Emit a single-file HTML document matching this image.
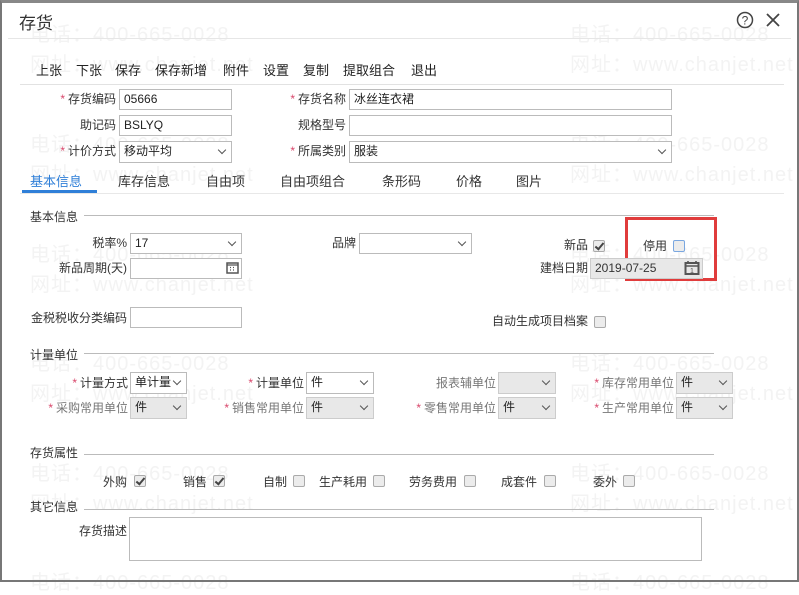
<!DOCTYPE html>
<html><head><meta charset="utf-8"><style>
*{box-sizing:border-box;margin:0;padding:0}
body{width:799px;height:583px;position:relative;background:#fff;font-family:"Liberation Sans","Noto Sans CJK SC",sans-serif;font-size:12px;color:#333;overflow:hidden}
.a{position:absolute;white-space:nowrap}
.wm{position:absolute;font-size:20px;color:#f3f3f3;letter-spacing:1px;white-space:nowrap}
.lb{position:absolute;text-align:right;white-space:nowrap;line-height:21px}
.st{color:#d9476b;margin-right:3px}
.in{position:absolute;border:1px solid #bbb;background:#fff;height:21px;line-height:19px;padding-left:4px;font-size:12px;color:#222}
.dis{background:#e8e8e8;border-color:#ccc}
.sel:after{content:"";position:absolute;right:6px;top:5px;width:5px;height:5px;border-right:1.6px solid #555;border-bottom:1.6px solid #555;transform:rotate(45deg)}
.cb{position:absolute;width:12px;height:12px;border:1px solid #aaa;border-radius:2px;background:#ececec}
.cb.on:after{content:"";position:absolute;left:3px;top:0px;width:3px;height:7px;border-right:2px solid #444;border-bottom:2px solid #444;transform:rotate(40deg)}
.ln{position:absolute;height:1px;background:#bbb}
.g{color:#777}
.tb{position:absolute;top:60px;font-size:13px;color:#222;white-space:nowrap}
</style></head><body>
<div class="wm" style="left:30px;top:18px">电话：400-665-0028</div><div class="wm" style="left:570px;top:18px">电话：400-665-0028</div>
<div class="wm" style="left:30px;top:48px">网址：www.chanjet.net</div><div class="wm" style="left:570px;top:48px">网址：www.chanjet.net</div>
<div class="wm" style="left:30px;top:128px">电话：400-665-0028</div><div class="wm" style="left:570px;top:128px">电话：400-665-0028</div>
<div class="wm" style="left:30px;top:158px">网址：www.chanjet.net</div><div class="wm" style="left:570px;top:158px">网址：www.chanjet.net</div>
<div class="wm" style="left:30px;top:238px">电话：400-665-0028</div><div class="wm" style="left:570px;top:238px">电话：400-665-0028</div>
<div class="wm" style="left:30px;top:268px">网址：www.chanjet.net</div><div class="wm" style="left:570px;top:268px">网址：www.chanjet.net</div>
<div class="wm" style="left:30px;top:347px">电话：400-665-0028</div><div class="wm" style="left:570px;top:347px">电话：400-665-0028</div>
<div class="wm" style="left:30px;top:377px">网址：www.chanjet.net</div><div class="wm" style="left:570px;top:377px">网址：www.chanjet.net</div>
<div class="wm" style="left:30px;top:457px">电话：400-665-0028</div><div class="wm" style="left:570px;top:457px">电话：400-665-0028</div>
<div class="wm" style="left:30px;top:487px">网址：www.chanjet.net</div><div class="wm" style="left:570px;top:487px">网址：www.chanjet.net</div>
<div class="wm" style="left:30px;top:566px">电话：400-665-0028</div><div class="wm" style="left:570px;top:566px">电话：400-665-0028</div>

<div class="a" style="left:0;top:0;width:799px;height:582px;border:2px solid #777;border-top:3px solid #888"></div>
<div class="a" style="left:19px;top:9px;font-size:17px;color:#333">存货</div>
<svg class="a" style="left:736px;top:11px" width="18" height="18"><circle cx="9" cy="9" r="7.5" fill="none" stroke="#444" stroke-width="1.5"/><text x="9" y="13.5" text-anchor="middle" font-size="12" font-family="Liberation Sans" fill="#444">?</text></svg>
<svg class="a" style="left:765px;top:12px" width="16" height="16"><path d="M2 2L14 14M14 2L2 14" stroke="#444" stroke-width="1.8"/></svg>
<div class="ln" style="left:8px;top:38px;width:783px;background:#e6e6e6"></div>
<div class="tb" style="left:36px">上张</div>
<div class="tb" style="left:76px">下张</div>
<div class="tb" style="left:115px">保存</div>
<div class="tb" style="left:155px">保存新增</div>
<div class="tb" style="left:223px">附件</div>
<div class="tb" style="left:263px">设置</div>
<div class="tb" style="left:303px">复制</div>
<div class="tb" style="left:343px">提取组合</div>
<div class="tb" style="left:411px">退出</div>
<div class="ln" style="left:20px;top:84px;width:764px;background:#e2e2e2"></div>

<div class="lb" style="left:20px;top:89px;width:96px"><span class="st">*</span>存货编码</div>
<div class="in" style="left:119px;top:89px;width:113px">05666</div>
<div class="lb" style="left:250px;top:89px;width:96px"><span class="st">*</span>存货名称</div>
<div class="in" style="left:349px;top:89px;width:323px">冰丝连衣裙</div>
<div class="lb" style="left:20px;top:115px;width:96px">助记码</div>
<div class="in" style="left:119px;top:115px;width:113px">BSLYQ</div>
<div class="lb" style="left:250px;top:115px;width:96px">规格型号</div>
<div class="in" style="left:349px;top:115px;width:323px"></div>
<div class="lb" style="left:20px;top:141px;width:96px"><span class="st">*</span>计价方式</div>
<div class="in sel" style="left:119px;top:141px;width:113px;height:22px">移动平均</div>
<div class="lb" style="left:250px;top:141px;width:96px"><span class="st">*</span>所属类别</div>
<div class="in sel" style="left:349px;top:141px;width:323px;height:22px">服装</div>

<div class="a" style="left:30px;top:171px;font-size:13px;color:#2f7fd8">基本信息</div>
<div class="a" style="left:22px;top:190px;width:75px;height:3px;background:#2f7fd8"></div>
<div class="a" style="left:118px;top:171px;font-size:13px">库存信息</div>
<div class="a" style="left:206px;top:171px;font-size:13px">自由项</div>
<div class="a" style="left:280px;top:171px;font-size:13px">自由项组合</div>
<div class="a" style="left:382px;top:171px;font-size:13px">条形码</div>
<div class="a" style="left:456px;top:171px;font-size:13px">价格</div>
<div class="a" style="left:516px;top:171px;font-size:13px">图片</div>
<div class="ln" style="left:20px;top:193px;width:764px;background:#e8e8e8"></div>

<div class="a" style="left:30px;top:208px">基本信息</div>
<div class="ln" style="left:84px;top:215px;width:630px"></div>
<div class="lb" style="left:30px;top:233px;width:97px">税率%</div>
<div class="in sel" style="left:130px;top:233px;width:112px">17</div>
<div class="lb" style="left:260px;top:233px;width:96px">品牌</div>
<div class="in sel" style="left:359px;top:233px;width:113px"></div>
<div class="lb" style="left:500px;top:235px;width:88px">新品</div>
<div class="cb on" style="left:593px;top:240px"></div>
<div class="a" style="left:643px;top:237px">停用</div>
<div class="cb" style="left:673px;top:240px;border-color:#7aa7e0"></div>
<div class="a" style="left:625px;top:217px;width:92px;height:64px;border:3px solid #e03c3c"></div>
<div class="lb" style="left:30px;top:258px;width:97px">新品周期(天)</div>
<div class="in" style="left:130px;top:258px;width:112px"></div>
<svg class="a" style="left:226px;top:261px" width="13" height="13"><rect x="1" y="2" width="11" height="10" fill="none" stroke="#555" stroke-width="1.5"/><path d="M1 4h11M4 6.5h1M7 6.5h1M4 9h1M7 9h1" stroke="#555" stroke-width="1.3"/></svg>
<div class="lb" style="left:500px;top:258px;width:88px">建档日期</div>
<div class="in dis" style="left:590px;top:258px;width:113px;color:#333">2019-07-25</div>
<svg class="a" style="left:684px;top:260px" width="16" height="16"><rect x="1.5" y="3" width="13" height="11" fill="none" stroke="#555" stroke-width="2"/><path d="M4 1v3M12 1v3M1 6h14" stroke="#555" stroke-width="1.6"/><text x="8" y="13" font-size="7" text-anchor="middle" fill="#555" font-family="Liberation Sans">1</text></svg>
<div class="lb" style="left:10px;top:308px;width:117px">金税税收分类编码</div>
<div class="in" style="left:130px;top:307px;width:112px"></div>
<div class="lb" style="left:440px;top:311px;width:148px">自动生成项目档案</div>
<div class="cb" style="left:594px;top:316px"></div>

<div class="a" style="left:30px;top:346px">计量单位</div>
<div class="ln" style="left:84px;top:353px;width:630px"></div>
<div class="lb" style="left:40px;top:373px;width:88px"><span class="st">*</span>计量方式</div>
<div class="in sel" style="left:130px;top:372px;width:57px;height:22px">单计量</div>
<div class="lb" style="left:200px;top:373px;width:104px"><span class="st">*</span>计量单位</div>
<div class="in sel" style="left:306px;top:372px;width:68px;height:22px">件</div>
<div class="lb g" style="left:400px;top:373px;width:96px">报表辅单位</div>
<div class="in sel dis" style="left:498px;top:372px;width:58px;height:22px"></div>
<div class="lb g" style="left:570px;top:373px;width:104px"><span class="st">*</span>库存常用单位</div>
<div class="in sel dis" style="left:676px;top:372px;width:57px;height:22px">件</div>
<div class="lb g" style="left:20px;top:398px;width:108px"><span class="st">*</span>采购常用单位</div>
<div class="in sel dis" style="left:130px;top:397px;width:57px;height:22px">件</div>
<div class="lb g" style="left:200px;top:398px;width:104px"><span class="st">*</span>销售常用单位</div>
<div class="in sel dis" style="left:306px;top:397px;width:68px;height:22px">件</div>
<div class="lb g" style="left:400px;top:398px;width:96px"><span class="st">*</span>零售常用单位</div>
<div class="in sel dis" style="left:498px;top:397px;width:58px;height:22px">件</div>
<div class="lb g" style="left:570px;top:398px;width:104px"><span class="st">*</span>生产常用单位</div>
<div class="in sel dis" style="left:676px;top:397px;width:57px;height:22px">件</div>

<div class="a" style="left:30px;top:444px">存货属性</div>
<div class="ln" style="left:84px;top:454px;width:630px"></div>
<div class="a" style="left:103px;top:473px">外购</div><div class="cb on" style="left:134px;top:475px"></div>
<div class="a" style="left:183px;top:473px">销售</div><div class="cb on" style="left:213px;top:475px"></div>
<div class="a" style="left:263px;top:473px">自制</div><div class="cb" style="left:293px;top:475px"></div>
<div class="a" style="left:319px;top:473px">生产耗用</div><div class="cb" style="left:373px;top:475px"></div>
<div class="a" style="left:409px;top:473px">劳务费用</div><div class="cb" style="left:464px;top:475px"></div>
<div class="a" style="left:501px;top:473px">成套件</div><div class="cb" style="left:544px;top:475px"></div>
<div class="a" style="left:593px;top:473px">委外</div><div class="cb" style="left:623px;top:475px"></div>

<div class="a" style="left:30px;top:498px">其它信息</div>
<div class="ln" style="left:84px;top:509px;width:630px"></div>
<div class="a" style="left:79px;top:522px">存货描述</div>
<div class="in" style="left:129px;top:517px;width:573px;height:44px"></div>
</body></html>
